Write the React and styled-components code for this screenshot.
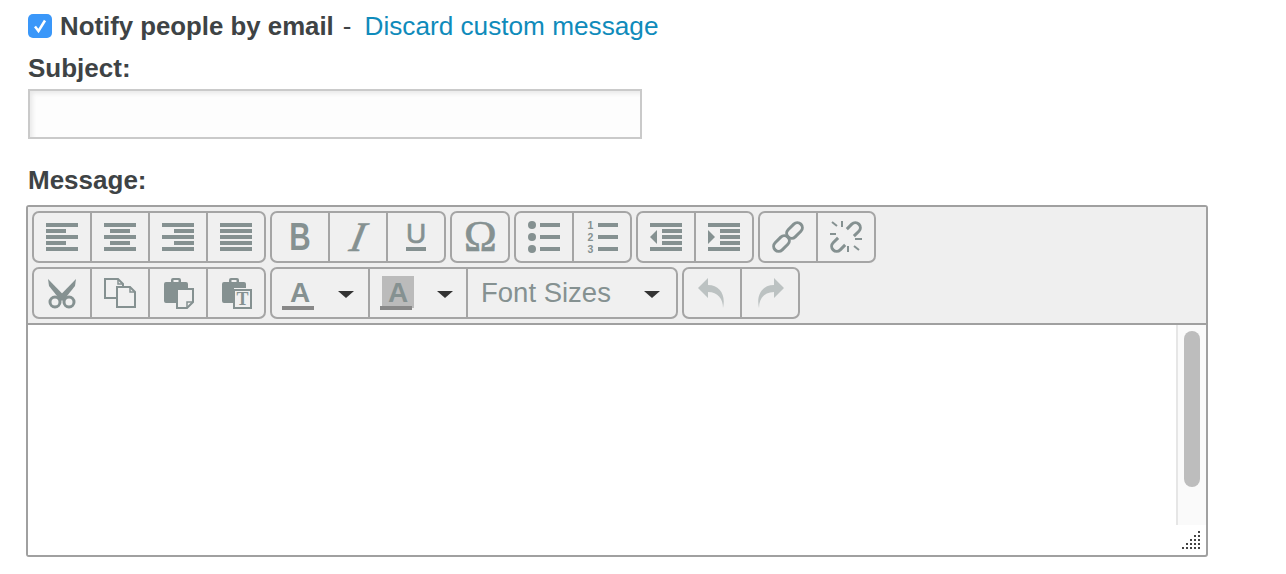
import styled, { createGlobalStyle } from 'styled-components';

const GlobalStyle = createGlobalStyle`
  body {
    margin: 0;
    background: #fff;
    font-family: 'Liberation Sans', Arial, sans-serif;
  }
`

const ICON = '#859191'

const Page = styled.div`
  display: flex;
  flex-direction: column;
  align-items: flex-start;
  width: 1286px;
  height: 574px;
  padding: 14px 0 0 28px;
  box-sizing: border-box;
  overflow: hidden;
`
const NotifyRow = styled.div`
  display: flex;
  align-items: center;
  height: 24px;
  font-size: 26px;
  color: #3e4345;
`
const CheckBox = styled.span`
  display: flex;
  align-items: center;
  justify-content: center;
  width: 24px;
  height: 24px;
  margin-right: 8px;
  border-radius: 5px;
  background: #3a97f9;
`
const NotifyText = styled.b`
  font-weight: 700;
  font-size: 25.8px;
`
const Dash = styled.span`
  margin: 0 13px 0 9px;
`
const DiscardLink = styled.a`
  font-size: 26.2px;
  color: #0f8bbb;
  text-decoration: none;
`
const FieldLabel = styled.label`
  display: block;
  height: 30px;
  line-height: 30px;
  font-size: 26px;
  font-weight: 700;
  color: #3e4345;
  margin-top: ${(p) => p.$top}px;
  margin-bottom: ${(p) => p.$bottom}px;
`
const SubjectInput = styled.input`
  display: block;
  width: 614px;
  height: 50px;
  box-sizing: border-box;
  border: 2px solid #cacaca;
  background: #fdfdfd;
  box-shadow: inset 4px 4px 5px -2px #e6e6e6;
  outline: none;
`
const Editor = styled.div`
  display: flex;
  flex-direction: column;
  width: 1182px;
  height: 352px;
  margin-left: -2px;
  box-sizing: border-box;
  border: 2px solid #a0a0a0;
  border-radius: 3px;
`
const Toolbar = styled.div`
  display: flex;
  flex-direction: column;
  gap: 4px;
  padding: 4px;
  background: #efefef;
  border-bottom: 2px solid #a0a0a0;
`
const ToolRow = styled.div`
  display: flex;
  gap: 4px;
`
const ToolGroup = styled.div`
  display: flex;
  height: 52px;
  box-sizing: border-box;
  border: 2px solid #a5a5a5;
  border-radius: 7px;
  background: #f0f0f0;
`
const ToolButton = styled.button`
  display: flex;
  align-items: center;
  justify-content: center;
  width: 56px;
  height: 48px;
  padding: 0;
  border: none;
  background: transparent;
  & > * {
    opacity: ${(p) => (p.$disabled ? 0.48 : 1)};
  }
  & + & {
    width: 58px;
    border-left: 2px solid #a5a5a5;
  }
`
const ColorButton = styled(ToolButton)`
  justify-content: flex-start;
  padding-left: 10px;
  width: 96px;
  box-sizing: border-box;
  & + & {
    width: 98px;
    padding-left: 10px;
  }
`
const SizeSelect = styled.button`
  display: flex;
  align-items: center;
  width: 210px;
  height: 48px;
  padding: 0 0 0 13px;
  box-sizing: border-box;
  border: none;
  border-left: 2px solid #a5a5a5;
  background: transparent;
  font-family: inherit;
  font-size: 27.5px;
  color: #859191;
`
const Caret = styled.span`
  width: 0;
  height: 0;
  margin-left: ${(p) => p.$left}px;
  margin-top: 2px;
  border-left: 8px solid transparent;
  border-right: 8px solid transparent;
  border-top: 7px solid #333;
`
const ColorIcon = styled.span`
  display: block;
  width: 32px;
  height: 34px;
  flex: none;
`
const Glyph = styled.span`
  display: block;
  width: 32px;
  height: 32px;
  line-height: 32px;
  text-align: center;
  color: ${ICON};
`
const BoldGlyph = styled(Glyph)`
  font-weight: 700;
  font-size: 39px;
  transform: scaleX(0.76);
`
const ItalicGlyph = styled(Glyph)`
  font-family: 'Liberation Serif', serif;
  font-style: italic;
  font-size: 42px;
  transform: skewX(-12deg);
  -webkit-text-stroke: 0.6px ${ICON};
`
const OmegaGlyph = styled(Glyph)`
  font-family: 'Liberation Serif', serif;
  font-size: 44px;
  -webkit-text-stroke: 0.7px ${ICON};
`
const UnderlineWrap = styled.span`
  display: flex;
  flex-direction: column;
  align-items: center;
  width: 32px;
  height: 32px;
`
const UnderlineGlyph = styled(Glyph)`
  height: 26px;
  line-height: 26px;
  font-size: 28px;
  -webkit-text-stroke: 0.6px ${ICON};
`
const UnderlineBar = styled.span`
  display: block;
  width: 20px;
  height: 4px;
  background: ${ICON};
`
const NumberedIcon = styled.span`
  display: flex;
  align-items: center;
  width: 32px;
  height: 32px;
`
const DigitColumn = styled.span`
  display: flex;
  flex-direction: column;
  flex: none;
  width: 9px;
  height: 36px;
`
const Digit = styled.span`
  display: block;
  height: 12px;
  line-height: 12px;
  font-size: 10.5px;
  font-weight: 700;
  text-align: center;
  color: ${ICON};
`
const EditorBody = styled.div`
  display: flex;
  flex: 1;
  min-height: 0;
`
const WriteArea = styled.div`
  flex: 1;
  background: #fff;
`
const SideColumn = styled.div`
  display: flex;
  flex-direction: column;
  width: 30px;
`
const ScrollTrack = styled.div`
  flex: 1;
  box-sizing: border-box;
  padding: 6px 6px 0 6px;
  border-left: 2px solid #e6e6e6;
  background: #fafafa;
`
const ScrollThumb = styled.div`
  width: 16px;
  height: 156px;
  border-radius: 8px;
  background: #bdbdbd;
`
const ResizeGrip = styled.div`
  height: 30px;
  box-sizing: border-box;
  padding: 6px;
`

const Icon = ({ children, size = 32 }) => (
  <svg width={size} height={size} viewBox={`0 0 ${size} ${size}`} style={{ display: 'block' }} fill={ICON}>
    {children}
  </svg>
)

const Bars = ({ bars }) => (
  <Icon>
    {bars.map(([x, y, w], i) => <rect key={i} x={x} y={y} width={w} height="4" />)}
  </Icon>
)

const alignBars = (narrowX, narrowW) => [
  [0, 2, 32], [narrowX, 8, narrowW], [0, 14, 32], [narrowX, 20, narrowW], [0, 26, 32],
]

const Clipboard = () => (
  <path d="M4 5h5V3a2 2 0 0 1 2-2h6a2 2 0 0 1 2 2v2h5a2 2 0 0 1 2 2v4H14v15H4a2 2 0 0 1-2-2V7a2 2 0 0 1 2-2zM11.500 3v2h5V3z" fillRule="evenodd" />
)

const ListLines = () => (
  <>
    <rect x="12" y="2" width="20" height="4" />
    <rect x="12" y="14" width="20" height="4" />
    <rect x="12" y="26" width="20" height="4" />
  </>
)

const IndentBars = () => (
  <>
    <rect x="0" y="2" width="32" height="4" />
    <rect x="12" y="8" width="20" height="4" />
    <rect x="12" y="14" width="20" height="4" />
    <rect x="12" y="20" width="20" height="4" />
    <rect x="0" y="26" width="32" height="4" />
  </>
)

const icons = {
  alignLeft: <Bars bars={alignBars(0, 20)} />,
  alignCenter: <Bars bars={alignBars(6, 20)} />,
  alignRight: <Bars bars={alignBars(12, 20)} />,
  justify: <Bars bars={alignBars(0, 32)} />,
  bold: <BoldGlyph>B</BoldGlyph>,
  italic: <ItalicGlyph>I</ItalicGlyph>,
  underline: (
    <UnderlineWrap>
      <UnderlineGlyph>U</UnderlineGlyph>
      <UnderlineBar />
    </UnderlineWrap>
  ),
  omega: <OmegaGlyph>Ω</OmegaGlyph>,
  bullets: (
    <Icon>
      <circle cx="4" cy="4" r="4" />
      <circle cx="4" cy="16" r="4" />
      <circle cx="4" cy="28" r="4" />
      <ListLines />
    </Icon>
  ),
  numbers: (
    <NumberedIcon>
      <DigitColumn>
        <Digit>1</Digit>
        <Digit>2</Digit>
        <Digit>3</Digit>
      </DigitColumn>
      <svg width="23" height="32" viewBox="9 0 23 32" style={{ display: 'block' }} fill={ICON}>
        <ListLines />
      </svg>
    </NumberedIcon>
  ),
  outdent: (
    <Icon>
      <IndentBars />
      <polygon points="7,9 7,23 0,16" />
    </Icon>
  ),
  indent: (
    <Icon>
      <IndentBars />
      <polygon points="0,9 0,23 7,16" />
    </Icon>
  ),
  link: (
    <Icon>
      <g fill="none" stroke={ICON} strokeWidth="3">
        <rect x="-9" y="-5" width="18" height="10" rx="5" transform="translate(9.500 22.500) rotate(-45)" />
        <rect x="-9" y="-5" width="18" height="10" rx="5" transform="translate(22.500 9.500) rotate(-45)" />
      </g>
    </Icon>
  ),
  unlink: (
    <Icon>
      <g fill="none" stroke={ICON} strokeWidth="3">
        <path d="M-3-5H4a5 5 0 0 1 0 10H-3" transform="translate(22.500 9.500) rotate(-45)" />
        <path d="M3-5H-4a5 5 0 0 0 0 10H3" transform="translate(9.500 22.500) rotate(-45)" />
        <path d="M12 0v6M0 13h6M2 1l5 4M18 25v6M25 18h7M24 25l5 4" strokeWidth="2" />
      </g>
    </Icon>
  ),
  cut: (
    <Icon>
      <polygon points="2,2 19.500,20 15,24 3,9" />
      <polygon points="30,2 12.500,20 17,24 29,9" />
      <circle cx="9" cy="25" r="5" fill="none" stroke={ICON} strokeWidth="3" />
      <circle cx="23" cy="25" r="5" fill="none" stroke={ICON} strokeWidth="3" />
    </Icon>
  ),
  copy: (
    <Icon>
      <g fill="#f0f0f0" stroke={ICON} strokeWidth="2">
        <path d="M1 2h13l5 5v14H1z" />
        <path d="M13 10h13l5 5v15H13z" />
        <path d="M14 2v5h5M26 10v5h5" fill="none" strokeWidth="1.500" />
      </g>
    </Icon>
  ),
  paste: (
    <Icon>
      <Clipboard />
      <path d="M15 12h16v13l-6 6H15z" fill="#f0f0f0" stroke={ICON} strokeWidth="2" />
      <path d="M25 31v-6h6" fill="none" stroke={ICON} strokeWidth="1.500" />
    </Icon>
  ),
  pasteText: (
    <Icon>
      <Clipboard />
      <rect x="14" y="13" width="17" height="18" fill="#f0f0f0" stroke={ICON} strokeWidth="2" />
      <text x="22.500" y="28" textAnchor="middle" fontFamily="Liberation Serif" fontWeight="700" fontSize="18">T</text>
    </Icon>
  ),
  undo: (
    <Icon>
      <path d="M2 11L12 1v7C24 8 30 18 27 31C27 22 22 15 12 15v6z" />
    </Icon>
  ),
  redo: (
    <Icon>
      <path d="M30 11L20 1v7C8 8 2 18 5 31C5 22 10 15 20 15v6z" />
    </Icon>
  ),
  textColor: (
    <Icon size={34}>
      <text x="18" y="26" textAnchor="middle" fontFamily="Liberation Sans" fontWeight="700" fontSize="28">A</text>
      <rect x="0" y="30" width="32" height="4" fill="#888" />
    </Icon>
  ),
  backColor: (
    <Icon size={34}>
      <rect x="2" y="0" width="32" height="32" fill="#bbb" />
      <text x="18" y="26" textAnchor="middle" fontFamily="Liberation Sans" fontWeight="700" fontSize="28">A</text>
      <rect x="0" y="30" width="32" height="4" fill="#888" />
    </Icon>
  ),
}

const Group = ({ names, disabled }) => (
  <ToolGroup>
    {names.map((name) => (
      <ToolButton key={name} type="button" $disabled={disabled}>{icons[name]}</ToolButton>
    ))}
  </ToolGroup>
)

const gripDots = [[16, 0], [12, 4], [16, 4], [8, 8], [12, 8], [16, 8], [4, 12], [8, 12], [12, 12], [16, 12], [0, 16], [4, 16], [8, 16], [12, 16], [16, 16]]

const App = () => {
  return (
    <Page>
      <GlobalStyle />
      <NotifyRow>
        <CheckBox>
          <svg width="16" height="16" viewBox="0 0 16 16" fill="none" stroke="#fff" strokeWidth="2.500">
            <path d="M3 8.500 L6.500 13 L13 2.500" />
          </svg>
        </CheckBox>
        <NotifyText>Notify people by email</NotifyText>
        <Dash>-</Dash>
        <DiscardLink href="#">Discard custom message</DiscardLink>
      </NotifyRow>
      <FieldLabel $top={15} $bottom={6}>Subject:</FieldLabel>
      <SubjectInput type="text" />
      <FieldLabel $top={26} $bottom={10}>Message:</FieldLabel>
      <Editor>
        <Toolbar>
          <ToolRow>
            <Group names={['alignLeft', 'alignCenter', 'alignRight', 'justify']} />
            <Group names={['bold', 'italic', 'underline']} />
            <Group names={['omega']} />
            <Group names={['bullets', 'numbers']} />
            <Group names={['outdent', 'indent']} />
            <Group names={['link', 'unlink']} />
          </ToolRow>
          <ToolRow>
            <Group names={['cut', 'copy', 'paste', 'pasteText']} />
            <ToolGroup>
              <ColorButton type="button">
                <ColorIcon>{icons.textColor}</ColorIcon>
                <Caret $left={24} />
              </ColorButton>
              <ColorButton type="button">
                <ColorIcon>{icons.backColor}</ColorIcon>
                <Caret $left={25} />
              </ColorButton>
              <SizeSelect type="button">
                Font Sizes
                <Caret $left={33} />
              </SizeSelect>
            </ToolGroup>
            <Group names={['undo', 'redo']} disabled />
          </ToolRow>
        </Toolbar>
        <EditorBody>
          <WriteArea />
          <SideColumn>
            <ScrollTrack>
              <ScrollThumb />
            </ScrollTrack>
            <ResizeGrip>
              <svg width="18" height="18" viewBox="0 0 18 18" style={{ display: 'block' }} fill="#444">
                {gripDots.map(([x, y]) => <rect key={`${x}-${y}`} x={x} y={y} width="2" height="2" />)}
              </svg>
            </ResizeGrip>
          </SideColumn>
        </EditorBody>
      </Editor>
    </Page>
  )
}

export default App;
